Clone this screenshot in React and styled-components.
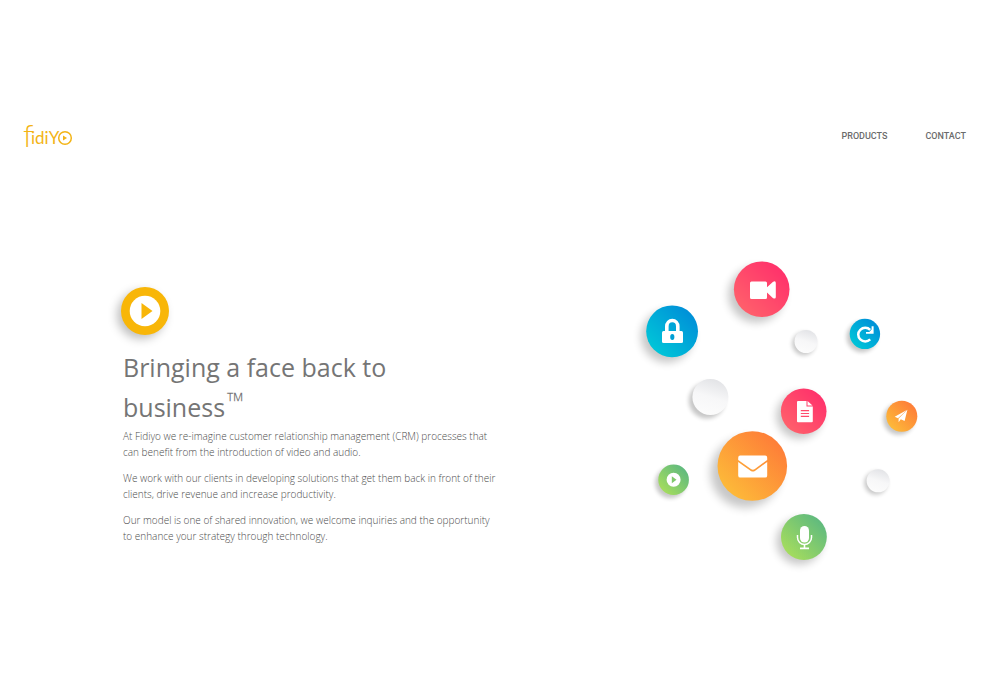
import React from "react";
import styled, { createGlobalStyle } from "styled-components";

const GlobalStyle = createGlobalStyle`
  * { box-sizing: border-box; }
  body {
    margin: 0;
    background: #fff;
    color: #4c4c4c;
    font-family: "Open Sans", "Liberation Sans", sans-serif;
  }
`;

const Page = styled.div`
  padding: 112px 0 64px;
`;

const Header = styled.header`
  display: flex;
  align-items: center;
  justify-content: space-between;
  height: 48px;
  padding: 0 34px 0 20px;
`;

const LogoLink = styled.a`
  display: block;
  height: 44px;
`;

const Nav = styled.nav`
  display: flex;
  gap: 38px;
`;

const NavLink = styled.a`
  color: #6b6b6b;
  font: 500 9px/16px Roboto, "Liberation Sans", sans-serif;
  text-decoration: none;
  text-transform: uppercase;
`;

const Hero = styled.main`
  display: flex;
  justify-content: space-between;
  gap: 40px;
  padding: 90px 70px 0 123px;
`;

const Intro = styled.section`
  flex: 0 1 376px;
  padding-top: 37px;
`;

const Badge = styled.div`
  display: flex;
  align-items: center;
  justify-content: center;
  width: 48px;
  height: 48px;
  margin-left: -2px;
  border-radius: 50%;
  background: #f8b608;
  box-shadow: -4px 4px 10px rgba(0, 0, 0, 0.25);
`;

const Title = styled.h1`
  max-width: 280px;
  margin: 12px 0 1px;
  color: #757575;
  font-size: 25px;
  font-weight: 400;
  line-height: 40px;
`;

const Mark = styled.sup`
  margin-left: 2px;
  font-size: 24px;
  font-weight: 300;
  line-height: 0;
  vertical-align: 7px;
`;

const Text = styled.p`
  margin: 0 0 10px;
  font-size: 10px;
  font-weight: 300;
  line-height: 16px;
`;

const Art = styled.div`
  flex: 0 1 300px;
  min-width: 0;

  svg {
    display: block;
    width: 100%;
    height: auto;
  }
`;

function Logo() {
  return (
    <svg width="54" height="44" viewBox="20 114 54 44" role="img" aria-label="Fidiyo">
      <g fill="#f3b416" fontFamily="Lato, sans-serif">
        <text x="23" y="147" fontSize="31" fontWeight="300">f</text>
        <text x="31" y="144" fontSize="17">idiY</text>
      </g>
      <circle cx="65" cy="138" r="6.3" fill="none" stroke="#f3b416" strokeWidth="1.5" />
      <path d="M63 135.500v5l4-2.500z" fill="#f3b416" />
    </svg>
  );
}

function Disc({ x, y, r, fill, children }) {
  return (
    <g>
      <circle
        cx={x - r * 0.2}
        cy={y + r * 0.2}
        r={r}
        fill="#000"
        opacity="0.22"
        filter={r > 30 ? "url(#softLarge)" : r > 20 ? "url(#softMedium)" : "url(#softSmall)"}
      />
      <circle cx={x} cy={y} r={r} fill={`url(#${fill})`} />
      {children}
    </g>
  );
}

const gradients = [
  ["pink", "#ff626b", "#ff2f6b"],
  ["blue", "#00c8d8", "#008dd8"],
  ["orange", "#fdbd39", "#fe7a38"],
  ["green", "#a8de5c", "#5cb880"],
];

const blurs = [
  ["softLarge", 5],
  ["softMedium", 4],
  ["softSmall", 2],
];

function Bubbles() {
  return (
    <svg viewBox="630 250 300 324" role="img" aria-label="Communication tools">
      <defs>
        {gradients.map(([id, from, to]) => (
          <linearGradient key={id} id={id} x1="0.1" y1="0.9" x2="0.9" y2="0.1">
            <stop offset="0" stopColor={from} />
            <stop offset="1" stopColor={to} />
          </linearGradient>
        ))}
        <linearGradient id="pale" x1="0.65" y1="0" x2="0.35" y2="1">
          <stop offset="0" stopColor="#e2e3e6" />
          <stop offset="0.5" stopColor="#f7f7f8" />
          <stop offset="1" stopColor="#fcfcfc" />
        </linearGradient>
        {blurs.map(([id, deviation]) => (
          <filter key={id} id={id} x="-40%" y="-40%" width="180%" height="180%">
            <feGaussianBlur stdDeviation={deviation} />
          </filter>
        ))}
      </defs>

      <Disc x={761.7} y={289.3} r={27.8} fill="pink">
        <path
          d="M751.500 281.500h14a1.500 1.500 0 0 1 1.500 1.500v4.200l5.800-5.300q3-1.500 3 1v14q0 2.500-3 1l-5.800-5.300v4.900a1.500 1.500 0 0 1-1.500 1.500h-14a1.500 1.500 0 0 1-1.500-1.500v-14.500a1.500 1.500 0 0 1 1.500-1.500z"
          fill="#fff"
        />
      </Disc>

      <Disc x={672.1} y={331.3} r={25.9} fill="blue">
        <path d="M666.800 332v-5.500a5.500 6 0 0 1 11 0v5.500" fill="none" stroke="#fff" strokeWidth="3.600" />
        <rect x="662" y="331" width="21" height="12" rx="1.500" fill="#fff" />
        <ellipse cx="672.300" cy="337" rx="2.100" ry="3" fill="#009fd5" />
      </Disc>

      <Disc x={806} y={341.5} r={11.5} fill="pale" />

      <Disc x={864.9} y={333.9} r={15.2} fill="blue">
        <path d="M870.200 329.800a7 6.800 0 1 0 0 9.600" fill="none" stroke="#fff" strokeWidth="2.500" />
        <path d="M873.600 326.200v7.600h-7.600v-1.700h3.300l2.300-2.500v-3.400z" fill="#fff" />
      </Disc>

      <Disc x={710.4} y={397} r={18} fill="pale" />

      <Disc x={803.7} y={411.3} r={22.8} fill="pink">
        <path d="M798 401h8.500v5.500h6.300v14.800q0 1-1 1h-13.800q-1 0-1-1v-19.300q0-1 1-1z" fill="#fff" />
        <path d="M807.500 401l5 4.500h-5z" fill="#fff" />
        <path d="M800.800 410.700h8.300M800.800 413.500h8.300M800.800 416.300h8.300" stroke="#ff4b6c" strokeWidth="1.200" />
      </Disc>

      <Disc x={752.3} y={466} r={34.8} fill="orange">
        <path d="M740.200 455.600h25q2 0 2 2.200v2.100l-12.300 9.200q-2 1.300-4 0l-12.700-9.200v-2.100q0-2.200 2-2.200z" fill="#fff" />
        <path d="M738.200 462l12.700 8.900q2 1.400 4 0l12.300-8.900v13.400q0 2.200-2 2.200h-25q-2 0-2-2.200z" fill="#fff" />
      </Disc>

      <Disc x={901.8} y={416.2} r={15.5} fill="orange">
        <path d="M907.300 409.800l-12.600 7 3.300 1.400z" fill="#fff" />
        <path d="M907.400 409.800l-8.800 8.700v3.700l2.200-2.900 3.800 1.700z" fill="#fff" />
      </Disc>

      <Disc x={673.6} y={479.8} r={15.3} fill="green">
        <circle cx="673.600" cy="479.800" r="7" fill="#fff" />
        <path d="M671.800 476.300v7l4.700-3.500z" fill="#80c96c" />
      </Disc>

      <Disc x={878.1} y={480.8} r={11.5} fill="pale" />

      <Disc x={803.9} y={537} r={22.9} fill="green">
        <rect x="800" y="526" width="9" height="16.500" rx="4.500" fill="#fff" />
        <path d="M797.500 535v2.500a7 7 0 0 0 14 0v-2.500" fill="none" stroke="#fff" strokeWidth="1.500" />
        <path d="M804.500 544v4.200M800 548.400h9" fill="none" stroke="#fff" strokeWidth="1.600" />
      </Disc>
    </svg>
  );
}

export default function App() {
  return (
    <Page>
      <GlobalStyle />
      <Header>
        <LogoLink href="#home">
          <Logo />
        </LogoLink>
        <Nav>
          <NavLink href="#products">Products</NavLink>
          <NavLink href="#contact">Contact</NavLink>
        </Nav>
      </Header>
      <Hero>
        <Intro>
          <Badge>
            <svg width="32" height="32" viewBox="0 0 32 32" aria-hidden="true">
              <circle cx="16" cy="16" r="15.300" fill="#fff" />
              <path d="M12.500 8v16l11-8z" fill="#f8b608" />
            </svg>
          </Badge>
          <Title>
            Bringing a face back to business<Mark>™</Mark>
          </Title>
          <Text>
            At Fidiyo we re-imagine customer relationship management (CRM) processes that can benefit
            from the introduction of video and audio.
          </Text>
          <Text>
            We work with our clients in developing solutions that get them back in front of their
            clients, drive revenue and increase productivity.
          </Text>
          <Text>
            Our model is one of shared innovation, we welcome inquiries and the opportunity to enhance
            your strategy through technology.
          </Text>
        </Intro>
        <Art>
          <Bubbles />
        </Art>
      </Hero>
    </Page>
  );
}
